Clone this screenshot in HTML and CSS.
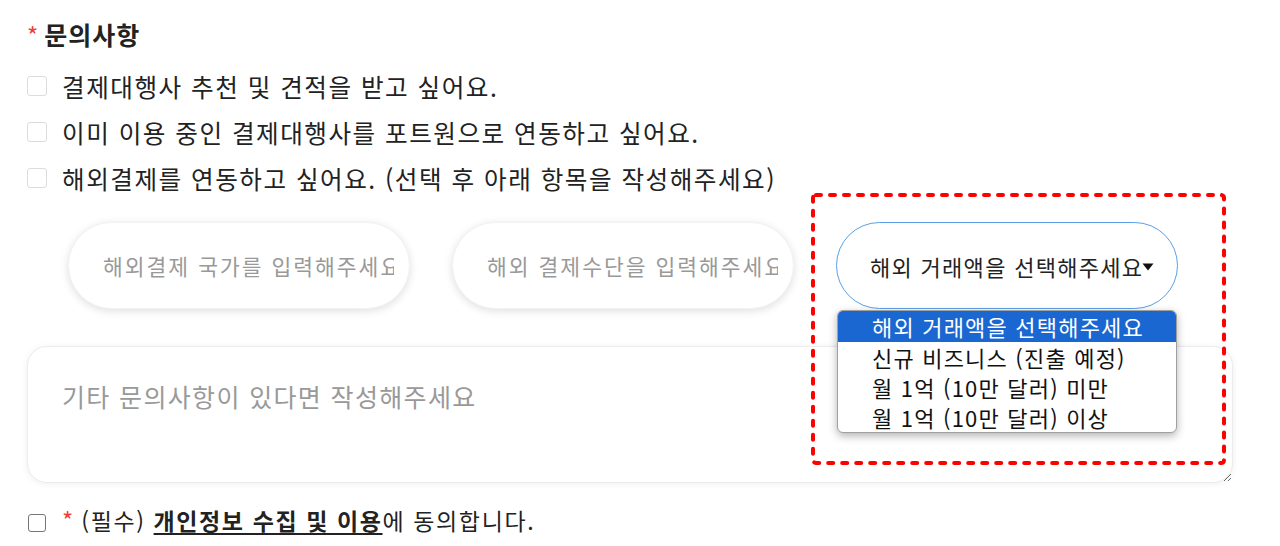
FILE: index.html
```html
<!DOCTYPE html>
<html lang="ko">

<head>
    <meta charset="UTF-8">
    <meta name="viewport" content="width=device-width, initial-scale=1.0">
    <title>문의사항</title>
    <link rel="stylesheet" href="styles.css">
</head>

<body>
    <section class="inquiry">
        <h3 class="title"><span class="req">*</span>문의사항</h3>

        <ul class="options">
            <li><span class="box"></span>결제대행사 추천 및 견적을 받고 싶어요.</li>
            <li><span class="box"></span>이미 이용 중인 결제대행사를 포트원으로 연동하고 싶어요.</li>
            <li><span class="box"></span>해외결제를 연동하고 싶어요. (선택 후 아래 항목을 작성해주세요)</li>
        </ul>

        <div class="pills">
            <input class="pill" type="text" placeholder="해외결제 국가를 입력해주세요">
            <input class="pill" type="text" placeholder="해외 결제수단을 입력해주세요">
            <div class="select-wrap">
                <div class="pill select">
                    <span>해외 거래액을 선택해주세요</span>
                    <svg class="caret" width="12" height="8" viewBox="0 0 12 8"><path d="M0.5 0.5h11L6 7.5z" fill="#111"/></svg>
                </div>
                <!-- opened list of the select -->
                <ul class="dropdown">
                    <li class="active">해외 거래액을 선택해주세요</li>
                    <li>신규 비즈니스 (진출 예정)</li>
                    <li>월 1억 (10만 달러) 미만</li>
                    <li>월 1억 (10만 달러) 이상</li>
                </ul>
            </div>
        </div>

        <textarea class="memo" placeholder="기타 문의사항이 있다면 작성해주세요"></textarea>

        <p class="agree">
            <span class="box small"></span><span class="req">*</span> (필수) <b class="link">개인정보 수집 및 이용</b>에 동의합니다.
        </p>

        <!-- highlight around the select -->
        <svg class="mark" width="417" height="273" viewBox="0 0 417 273">
            <rect x="2" y="2" width="411" height="268" rx="3" fill="none" stroke="#ff0000" stroke-width="4"
                stroke-dasharray="5 9" stroke-linecap="round"/>
        </svg>
    </section>
</body>

</html>
```

FILE: styles.css
```css
* {
    margin: 0;
    padding: 0;
    box-sizing: border-box;
    outline: none;
}

body {
    background-color: #fff;
    color: #222;
    font-family: "Noto Sans CJK KR", "Noto Sans", sans-serif;
    width: 1280px;
    height: 546px;
    overflow: hidden;
}

.inquiry {
    position: relative;
    padding: 18px 0 0 27px;
}

.req {
    color: #f23b3b;
}

.title {
    height: 32px;
    font-size: 25px;
    font-weight: 700;
    line-height: 32px;
    letter-spacing: 1px;
}

.title .req {
    margin-right: 6px;
    font-size: 24px;
    font-weight: 400;
    letter-spacing: 0;
}

.options {
    list-style: none;
    margin-top: 13px;
}

.options li {
    display: flex;
    align-items: center;
    height: 46px;
    font-size: 24.6px;
    letter-spacing: 1.5px;
}

.box {
    display: inline-block;
    width: 20px;
    height: 20px;
    border: 1px solid #dcdcdc;
    border-radius: 3px;
    margin-right: 15px;
    flex-shrink: 0;
}

.pills {
    display: flex;
    gap: 42px;
    margin: 21px 0 0 41px;
}

.pill {
    width: 342px;
    height: 87px;
    border: 1px solid #f2f2f2;
    border-radius: 44px;
    background: #fff;
    box-shadow: 0 2px 8px rgba(0, 0, 0, 0.13);
    padding: 0 15px 0 34px;
    font-family: inherit;
    font-size: 21.5px;
    letter-spacing: 2px;
    color: #222;
}

.pill::placeholder {
    color: #999;
}

.select-wrap {
    position: relative;
}

.select {
    display: flex;
    align-items: center;
    border: 1px solid #5aa0e6;
    box-shadow: none;
    font-size: 22px;
    letter-spacing: 1.3px;
    padding-left: 33px;
}

.caret {
    margin: 2px 0 0 -1px;
}

.dropdown {
    position: absolute;
    top: 88px;
    left: 1px;
    width: 340px;
    list-style: none;
    background: #fff;
    border: 1px solid #a0a0a0;
    border-radius: 6px;
    box-shadow: 0 3px 8px rgba(0, 0, 0, 0.3);
    overflow: hidden;
    z-index: 2;
}

.dropdown li {
    height: 30px;
    line-height: 30px;
    padding-left: 34px;
    font-size: 22px;
    letter-spacing: 1.2px;
    color: #111;
}

.dropdown .active {
    height: 31px;
    background: #1a67d2;
    color: #fff;
}

.memo {
    display: block;
    width: 1206px;
    height: 137px;
    margin-top: 37px;
    border: 1px solid #ececec;
    border-radius: 20px;
    box-shadow: 0 1px 6px rgba(0, 0, 0, 0.07);
    padding: 32px 34px;
    font-family: inherit;
    font-size: 25px;
    letter-spacing: 1.35px;
    line-height: 34px;
    color: #222;
}

.memo::placeholder {
    color: #999;
}

.agree {
    height: 30px;
    line-height: 30px;
    margin-top: 22px;
    font-size: 23px;
    letter-spacing: 1.6px;
    white-space: nowrap;
}

.box.small {
    width: 18px;
    height: 18px;
    border: 1.5px solid #767676;
    border-radius: 3px;
    margin: 0 16px 0 1px;
    vertical-align: -2px;
}

.agree .req {
    font-size: 24px;
    letter-spacing: 0;
}

.link {
    font-weight: 700;
    text-decoration: underline;
    text-underline-offset: 3px;
}

.mark {
    position: absolute;
    left: 811px;
    top: 193px;
    pointer-events: none;
}
```
